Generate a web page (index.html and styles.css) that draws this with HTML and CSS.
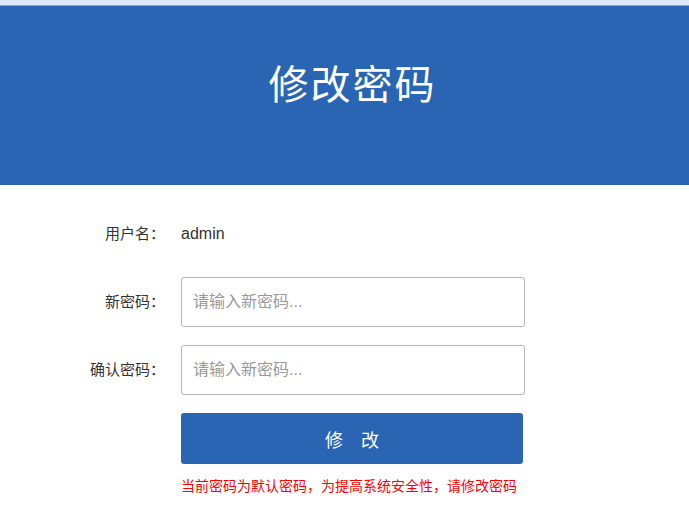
FILE: index.html
```html
<!DOCTYPE html>
<html lang="zh-CN">
<head>
  <meta charset="UTF-8" />
  <meta name="viewport" content="width=device-width, initial-scale=1.0"/>
  <title>修改密码</title>
  <link rel="stylesheet" href="styles.css">
</head>
<body>

  <div class="topbar"></div>
  <header>修改密码</header>

  <form class="pwd-form" onsubmit="return false;">
    <label class="label">用户名：</label>
    <div class="value">admin</div>

    <label class="label" for="newPwd">新密码：</label>
    <input type="password" id="newPwd" placeholder="请输入新密码..." />

    <label class="label" for="confirmPwd">确认密码：</label>
    <input type="password" id="confirmPwd" placeholder="请输入新密码..." />

    <span></span>
    <button type="submit">修　改</button>

    <span></span>
    <p class="tip">当前密码为默认密码，为提高系统安全性，请修改密码</p>
  </form>

</body>
</html>
```

FILE: styles.css
```css
body {
  font-family: "Liberation Sans", "Noto Sans CJK SC", sans-serif;
  margin: 0;
  padding: 0;
  background: #fff;
  color: #333;
}

.topbar {
  height: 5px;
  background: #dbe9f8;
  border-bottom: 1px solid #8ea3bf;
}

header {
  background-color: #2965b3;
  color: #fff;
  height: 179px;
  display: flex;
  align-items: center;
  justify-content: center;
  font-size: 40px;
  letter-spacing: 2px;
  padding-left: 16px;
  padding-bottom: 28px;
  box-sizing: border-box;
}

.pwd-form {
  display: grid;
  grid-template-columns: 165px 344px;
  column-gap: 16px;
  grid-auto-rows: 50px;
  row-gap: 18px;
  padding-top: 24px;
}

.label {
  display: flex;
  align-items: center;
  justify-content: flex-end;
  font-size: 15px;
  color: #333;
  padding-bottom: 3px;
}

.value {
  display: flex;
  align-items: center;
  font-size: 16px;
  color: #333;
}

.pwd-form input {
  box-sizing: border-box;
  width: 344px;
  height: 50px;
  padding: 0 11px;
  border: 1px solid #b5b5b5;
  border-radius: 3px;
  font-size: 16px;
  font-family: "Liberation Sans", "Noto Sans CJK SC", sans-serif;
}

.pwd-form input::placeholder {
  color: #999;
}

.pwd-form button {
  width: 342px;
  height: 51px;
  background-color: #2965b3;
  color: #fff;
  border: none;
  border-radius: 3px;
  font-size: 18px;
  font-family: "Liberation Sans", "Noto Sans CJK SC", sans-serif;
  cursor: pointer;
}

.tip {
  margin: 0;
  align-self: start;
  margin-top: -6px;
  color: #f00;
  font-size: 14px;
  white-space: nowrap;
}
```
